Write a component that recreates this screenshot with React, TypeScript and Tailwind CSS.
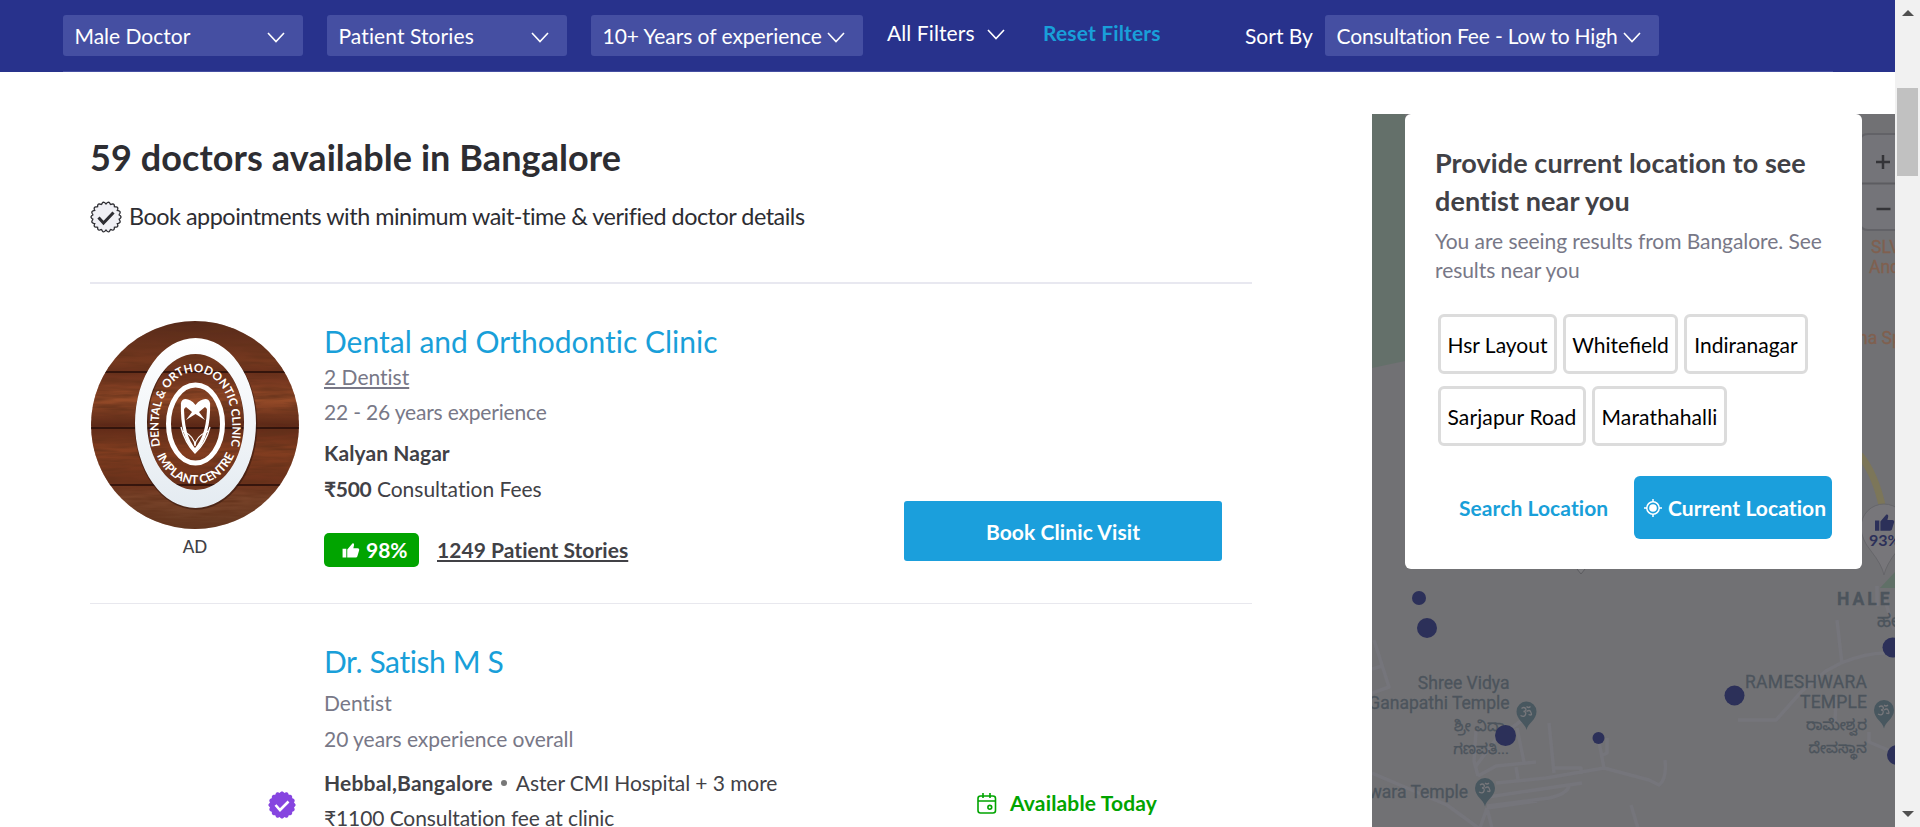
import React from "react";

function Chevron({ className = "" }: { className?: string }) {
  return (
    <svg viewBox="0 0 18 11" className={"h-[11px] w-[18px] shrink-0 " + className} fill="none" stroke="#fff" strokeWidth="1.6">
      <path d="M1 1 9 9.6 17 1" />
    </svg>
  );
}

function Filter({ label, className }: { label: string; className: string }) {
  return (
    <button className={"flex h-[41px] shrink-0 items-center justify-between rounded-[3px] bg-[#454fa2] pl-[11.5px] text-[21px] leading-[28px] whitespace-nowrap " + className}>
      <span>{label}</span>
      <Chevron className="mt-[3px]" />
    </button>
  );
}

const seal = (cx: number, cy: number, r: number, depth: number, lobes: number) =>
  Array.from({ length: 120 }, (_, i) => {
    const a = (i / 120) * Math.PI * 2;
    const q = r - depth * (1 - Math.abs(Math.cos((a * lobes) / 2)));
    return (i ? "L" : "M") + (cx + q * Math.cos(a)).toFixed(2) + " " + (cy + q * Math.sin(a)).toFixed(2);
  }).join("") + "Z";

function Thumb({ className }: { className: string }) {
  return (
    <svg viewBox="0 0 18 16" className={className} fill="currentColor">
      <path d="M0 6h4v9.500H0zM5 15.500V7L10.500.5c1.500-.5 2 .7 1.700 2L11.500 5.500H16c1.400 0 2 1 1.700 2.200l-1.900 6.300c-.3 1-1 1.500-2 1.500z" />
    </svg>
  );
}

function ClinicLogo() {
  return (
    <svg viewBox="0 0 208 208" className="h-[208px] w-[208px]">
      <defs>
        <clipPath id="round"><circle cx="104" cy="104" r="104" /></clipPath>
        <linearGradient id="wood" x1="0" y1="0" x2="0" y2="1">
          <stop offset="0" stopColor="#55291a" /><stop offset=".2" stopColor="#77391f" />
          <stop offset=".25" stopColor="#6b301c" /><stop offset=".38" stopColor="#964b28" />
          <stop offset=".5" stopColor="#5c2817" /><stop offset=".62" stopColor="#843e20" />
          <stop offset=".78" stopColor="#6c311b" /><stop offset=".85" stopColor="#7a442a" />
          <stop offset="1" stopColor="#633821" />
        </linearGradient>
        <linearGradient id="ring" x1="0" y1="0" x2="0" y2="1">
          <stop offset="0" stopColor="#fff" /><stop offset="1" stopColor="#e4ebf1" />
        </linearGradient>
        <filter id="grain" x="0" y="0" width="100%" height="100%">
          <feTurbulence type="fractalNoise" baseFrequency=".025 .22" numOctaves="3" seed="4" />
          <feColorMatrix values="0 0 0 0 .12  0 0 0 0 .03  0 0 0 0 .01  1.600 0 0 0 -.55" />
        </filter>
        <path id="arcTop" d="M69 124 C62 78 82 51 104 51 C127 51 147 78 140 124" />
        <path id="arcBottom" d="M64 130 C80 174 129 174 145 130" />
      </defs>
      <g clipPath="url(#round)">
        <rect width="208" height="208" fill="url(#wood)" />
        <rect width="208" height="208" filter="url(#grain)" />
        <path d="M0 51H208M0 107H208M0 164H208" stroke="#240d08" strokeWidth="1.600" />
        <ellipse cx="105" cy="103.500" rx="54.500" ry="78.500" fill="none" stroke="#2c120b" strokeWidth="13.500" opacity=".5" />
        <path fillRule="evenodd" fill="url(#ring)" d="M104.500 17A60.500 85 0 0 1 104.500 187A60.500 85 0 0 1 104.500 17ZM104.500 33A48.500 68 0 0 0 104.500 169A48.500 68 0 0 0 104.500 33Z" />
        <ellipse cx="104.500" cy="103" rx="27" ry="39" fill="none" stroke="#fff" strokeWidth="5" />
        <path d="M91.500 82C91 100 93 118 104 129.500C115 118 118 100 117.500 82" fill="none" stroke="#fff" strokeWidth="3.200" />
        <path fill="#fff" d="M90 82C91 76 99 77 104.500 84C110 77 118 76 119 82L118 90L114 86L108 91L114 99L104.500 93L95 99L101 91L95 86L91 90Z" />
        <path d="M92 110Q104 116 104 125Q104 116 117 110M90 106Q94 122 104 132Q115 122 119 106" fill="none" stroke="#fff" strokeWidth="1.300" />
        <g fill="#fff" fontFamily="Lato, sans-serif" fontWeight="700" textAnchor="middle">
          <text fontSize="11.600"><textPath href="#arcTop" startOffset="50%">DENTAL &amp; ORTHODONTIC CLINIC</textPath></text>
          <text fontSize="12"><textPath href="#arcBottom" startOffset="50%">IMPLANT CENTRE</textPath></text>
        </g>
      </g>
    </svg>
  );
}

function TemplePin({ x, y }: { x: number; y: number }) {
  return (
    <g transform={`translate(${x} ${y})`}>
      <path d="M0 18.500C-1 12-10 8.500-10 0A10 10 0 0 1 10 0C10 8.500 1 12 0 18.500Z" fill="#48575f" />
      <path d="M-5-3q2.500-2 4 0t-2 3q3 0 2 3t-5 1M0 0q3-2 4 0t1 3-3 0M0-5q2 2 4 0" fill="none" stroke="#77777b" strokeWidth="1.300" />
    </g>
  );
}

const dots = [
  [1419, 598, 7], [1427, 628, 10], [1505.500, 735.500, 10.500], [1598.500, 738, 6],
  [1734.500, 695.500, 10], [1892.500, 647.500, 10], [1897, 755, 10],
];

function MapView() {
  return (
    <svg viewBox="1372 114 523 713" className="h-[713px] w-[523px]">
      <rect x="1372" y="114" width="523" height="713" fill="#717174" />
      <path d="M1372 114h33v247l-33 7z" fill="#64706a" />
      <path d="M1895 572v16h-15z" fill="#607067" />
      <g fill="none" stroke="#75757b" strokeWidth="3.500" strokeLinejoin="round">
        <path d="M1374 640l15 47-17 6M1372 669l10-3M1372 773l75 32 37 27M1549 723l5 50M1517 728l7 34M1478 776l18-10 40-4M1478 776l-4-15 2-30M1476 766l20-27 25-18M1496 783l50-5 58-10 45 12 10 5q8-6 6-25M1604 768l-5-26M1607 738v15l-6 3M1555 768h26v6M1516 767l2 12M1488 797l94-14M1487 806l62-8q18-4 20-12M1487 808l50-7M1487 808l-7 20M1487 808l5 20M1631 805l9 30M1738 720h38l25-28 26-22M1837 620l5 44M1826 671l15-8q25-10 44-10M1836 697l-1 25M1869 732v10l26 11M1877 606v-20M1885 600l9 30" />
      </g>
      <path d="M1860 455q16 20 23 55" fill="none" stroke="#7c7659" strokeWidth="7" />
      <path d="M1895 134h-27q-8 0-8 8v80q0 8 8 8h27" fill="#747479" stroke="#626267" strokeWidth="2" />
      <path d="M1860 183.500h35" stroke="#5c5c61" strokeWidth="2" />
      <path d="M1876 162h14M1883 155v14M1876.500 209h14" stroke="#343438" strokeWidth="2.500" />
      <path d="M1884 575q-2-10-13-24-10-12-10-24a23 23 0 0 1 46 0q0 12-10 24-11 14-13 24z" fill="#77767a" stroke="#66666a" />
      <path d="M1577 569l4 5 4-5" fill="#79797c" stroke="#5c5c60" />
      <path transform="translate(1875 514) scale(1.080)" d="M0 6h4v9.500H0zM5 15.500V7L10.500.5c1.500-.5 2 .7 1.700 2L11.500 5.500H16c1.400 0 2 1 1.700 2.200l-1.900 6.300c-.3 1-1 1.500-2 1.500z" fill="#2c3059" />
      <text x="1869" y="546" fontFamily="Lato, sans-serif" fontWeight="700" fontSize="16" fill="#2c3059">93%</text>
      <g fontFamily="Roboto, 'Noto Sans Kannada', sans-serif" fontSize="17.500" fill="#4c545c" stroke="#4c545c" strokeWidth=".3">
        <g fill="#80604f" stroke="#80604f">
          <text x="1871" y="253">SLV</text>
          <text x="1869" y="273">And</text>
          <text x="1858" y="344">na Spa</text>
        </g>
        <text x="1837" y="605" fontWeight="700" letterSpacing="3">HALE</text>
        <text x="1877" y="627">ಹಲೆ</text>
        <g textAnchor="end">
          <text x="1509.500" y="689">Shree Vidya</text>
          <text x="1509.500" y="709">Ganapathi Temple</text>
          <text x="1509" y="731" fontSize="15">ಶ್ರೀ ವಿದ್ಯಾ</text>
          <text x="1509" y="754" fontSize="15">ಗಣಪತಿ...</text>
          <text x="1468" y="798">Rameshwara Temple</text>
          <text x="1867" y="688" textLength="122">RAMESHWARA</text>
          <text x="1867" y="708" textLength="67">TEMPLE</text>
          <text x="1867" y="730" fontSize="15">ರಾಮೇಶ್ವರ</text>
          <text x="1867" y="753" fontSize="15">ದೇವಸ್ಥಾನ</text>
        </g>
      </g>
      <TemplePin x={1526.500} y={711.500} />
      <TemplePin x={1485} y={788} />
      <TemplePin x={1884} y={710} />
      {dots.map(([x, y, r]) => <circle key={x} cx={x} cy={y} r={r} fill="#2c3059" />)}
    </svg>
  );
}

function Place({ name, className }: { name: string; className: string }) {
  return <button className={"flex h-[60px] items-center justify-center rounded-md border-[3px] border-[#dcdcdc] pt-[2px] text-[21px] text-black whitespace-nowrap [font-variant-ligatures:normal] " + className}>{name}</button>;
}

function LocationPanel() {
  return (
    <div className="absolute top-0 left-[33px] flex h-[455px] w-[457px] flex-col rounded-md bg-white">
      <h2 className="mt-[30px] ml-[30px] text-[27px] leading-[38px] font-bold tracking-[0.08px] text-[#414146] whitespace-nowrap">Provide current location to see<br />dentist near you</h2>
      <p className="mt-[6px] ml-[30px] text-[21px] leading-[29px] tracking-[-0.06px] text-[#787887] whitespace-nowrap">You are seeing results from Bangalore. See<br />results near you</p>
      <div className="mt-[30px] ml-[33px] flex gap-[6px]">
        <Place name="Hsr Layout" className="w-[119px]" />
        <Place name="Whitefield" className="w-[115px]" />
        <Place name="Indiranagar" className="w-[124px]" />
      </div>
      <div className="mt-3 ml-[33px] flex gap-[6px]">
        <Place name="Sarjapur Road" className="w-[148px] tracking-[0.12px]" />
        <Place name="Marathahalli" className="w-[135px] tracking-[0.16px]" />
      </div>
      <div className="mt-[30px] ml-[54px] flex items-center text-[21px] font-bold tracking-[0.08px] whitespace-nowrap">
        <button className="w-[175px] text-left text-[#199fd9]">Search Location</button>
        <button className="flex h-[63px] w-[198px] items-center rounded-md bg-[#1b9fdc] pl-[10px] text-white">
          <svg viewBox="0 0 18 18" className="mr-[6px] h-[18px] w-[18px] shrink-0" fill="none" stroke="#fff" strokeWidth="1.500">
            <circle cx="9" cy="9" r="6.200" /><circle cx="9" cy="9" r="3.800" fill="#fff" stroke="none" />
            <path d="M9 0v3M9 15v3M0 9h3M15 9h3" />
          </svg>
          Current Location
        </button>
      </div>
    </div>
  );
}

export default function App() {
  return (
    <div className="flex h-[827px] w-[1920px] overflow-hidden bg-white font-['Lato',sans-serif] text-[21px] text-[#414146] [font-variant-ligatures:no-common-ligatures]">
      <div className="flex w-[1895px] shrink-0 flex-col">
        <header className="h-[72px] shrink-0 bg-[#28328c] pr-[62px] pl-[63px] text-white">
          <div className="flex h-[72px] items-start border-b border-[#454fa2] pt-[15px]">
            <Filter label="Male Doctor" className="mr-6 w-[240px] pr-[18px]" />
            <Filter label="Patient Stories" className="mr-6 w-[240px] pr-[18px] tracking-[0.1px]" />
            <Filter label="10+ Years of experience" className="mr-6 w-[272px] pr-[18px] tracking-[-0.04px]" />
            <span className="flex w-[156px] items-center leading-[28px] whitespace-nowrap"><span className="pt-[4px] tracking-[0.1px]">All Filters</span><Chevron className="mt-[7px] ml-3" /></span>
            <button className="mt-[4px] w-[202px] text-left leading-[28px] font-bold tracking-[0.15px] text-[#199fd9]">Reset Filters</button>
            <span className="mt-[7px] w-[80px] leading-[28px]">Sort By</span>
            <Filter label="Consultation Fee - Low to High" className="w-[334px] pr-[18px] tracking-[-0.16px]" />
          </div>
        </header>
        <div className="flex h-[755px]">
          <main className="ml-[90px] w-[1162px] shrink-0">
            <h1 className="mt-[63px] text-[36px] leading-[44px] font-bold tracking-[0.08px] text-[#2d2d32]">59 doctors available in Bangalore</h1>
            <div className="mt-[19px] flex h-[38px] items-center text-[23.4px] tracking-[-0.48px] text-[#2d2d32]">
              <svg viewBox="0 0 32 32" className="mr-[7px] h-8 w-8">
                <path d={seal(16, 16, 15, 2, 18)} fill="#f0f0f5" stroke="#2d2d32" strokeWidth="1.300" />
                <path d="M8.500 16.500l5 5.500 10-10.500" fill="none" stroke="#2d2d32" strokeWidth="3" />
              </svg>
              <span>Book appointments with minimum wait-time &amp; verified doctor details</span>
            </div>
            <section className="mt-[46px] flex h-[320px] border-t-2 border-[#e8e8f0]">
              <div className="mt-[37px] ml-px flex w-[233px] flex-col items-start">
                <ClinicLogo />
                <span className="mt-[7px] w-[208px] text-center text-[17px] leading-[22px] font-medium">AD</span>
              </div>
              <div className="mt-[39px] w-[580px] leading-[28px]">
                <h3 className="text-[30px] leading-[36px] text-[#199fd9]">Dental and Orthodontic Clinic</h3>
                <a className="mt-1 block text-[#787887] underline">2 Dentist</a>
                <p className="mt-[7px] tracking-[-0.18px] text-[#787887]">22 - 26 years experience</p>
                <p className="mt-[13px] font-bold tracking-[0.08px]">Kalyan Nagar</p>
                <p className="mt-2"><b className="tracking-[-0.3px]">₹500</b> Consultation Fees</p>
                <div className="mt-[30px] flex h-[34px] items-center">
                  <span className="mr-[18px] flex h-[34px] w-[95px] items-center rounded-[5px] bg-[#01a400] pl-[18px] font-bold text-white"><Thumb className="mr-[6px] h-[15px] w-[18px]" />98%</span>
                  <a className="font-bold tracking-[0.04px] underline">1249 Patient Stories</a>
                </div>
              </div>
              <button className="mt-[217px] h-[60px] w-[318px] rounded-[3px] bg-[#1b9fdc] pt-[2px] font-bold tracking-[0.1px] text-white">Book Clinic Visit</button>
            </section>
            <section className="mt-px flex border-t border-[#e8e8ee]">
              <div className="w-[234px] pt-[187px] pl-[178px]">
                <svg viewBox="0 0 28 28" className="h-7 w-7">
                  <path d={seal(14, 14, 13.600, 1.500, 16)} fill="#8645e0" />
                  <path d="M7.500 14l4.500 5 8.500-8.500" fill="none" stroke="#fff" strokeWidth="2.600" />
                </svg>
              </div>
              <div className="mt-[39px] w-[653px] leading-[28px]">
                <h3 className="text-[30px] leading-[36px] tracking-[-0.4px] text-[#199fd9]">Dr. Satish M S</h3>
                <p className="mt-[10px] text-[#787887]">Dentist</p>
                <p className="mt-2 tracking-[-0.04px] text-[#787887]">20 years experience overall</p>
                <p className="mt-4 flex items-center tracking-[-0.08px]"><b className="tracking-[0.2px]">Hebbal,Bangalore</b><i className="mx-[8.5px] h-[6px] w-[6px] rounded-full bg-[#787878]" />Aster CMI Hospital + 3 more</p>
                <p className="mt-[7px] tracking-[-0.1px]">₹1100 Consultation fee at clinic</p>
              </div>
              <div className="mt-[185px] flex items-center self-start leading-[28px] font-bold tracking-[0.16px] text-[#01a400]">
                <svg viewBox="0 0 20 21" className="mr-[13px] h-[21px] w-5" fill="none" stroke="#01a400" strokeWidth="1.600">
                  <rect x="1" y="3" width="17.500" height="17" rx="2.500" /><path d="M1 8h17.500M6 0v5M13 0v5" /><circle cx="12.800" cy="14.300" r="1.900" />
                </svg>
                Available Today
              </div>
            </section>
          </main>
          <aside className="relative mt-[42px] ml-[120px] h-[713px] w-[523px] shrink-0">
            <MapView />
            <LocationPanel />
          </aside>
        </div>
      </div>
      <div className="flex w-[25px] shrink-0 flex-col items-center bg-[#f1f1f1]">
        <svg viewBox="0 0 12 6" className="mt-[10px] h-[6px] w-3"><path d="M0 6 6 0l6 6z" fill="#505050" /></svg>
        <div className="mt-[72px] h-[88px] w-[21px] bg-[#c1c1c1]" />
        <svg viewBox="0 0 12 6" className="mt-auto mb-[10px] h-[6px] w-3"><path d="M0 0h12L6 6z" fill="#505050" /></svg>
      </div>
    </div>
  );
}
